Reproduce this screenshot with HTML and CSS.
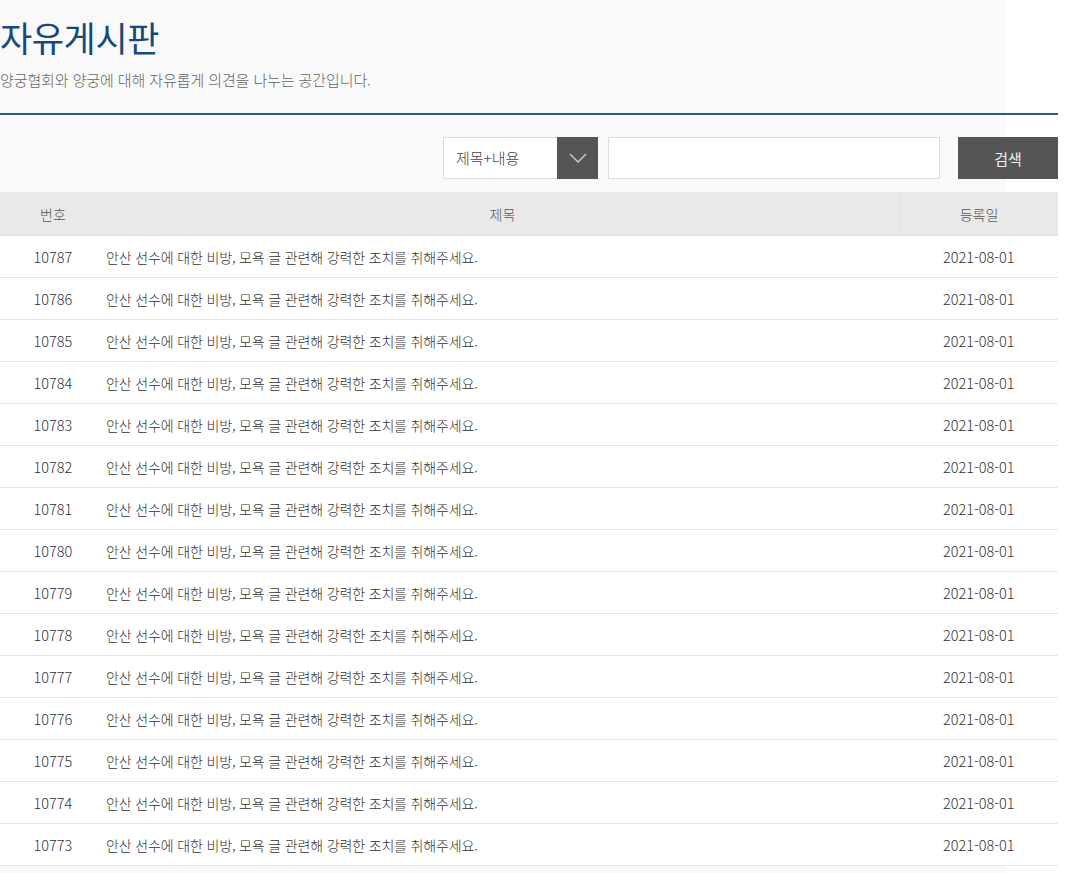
FILE: index.html
```html
<!DOCTYPE html>
<html lang="ko">
<head>
    <meta charset="UTF-8">
    <meta name="viewport" content="width=device-width, initial-scale=1.0">
    <title>자유게시판</title>
    <link rel="stylesheet" href="styles.css">
</head>
<body>
    <div class="page">
        <!-- Title -->
        <div class="board-head">
            <h1>자유게시판</h1>
            <p>양궁협회와 양궁에 대해 자유롭게 의견을 나누는 공간입니다.</p>
        </div>

        <!-- Search -->
        <form class="search">
            <div class="search-select">
                <span class="select-label">제목+내용</span>
                <span class="select-arrow">
                    <svg width="18" height="10" viewBox="0 0 18 10"><polyline points="1,1 9,9 17,1" fill="none" stroke="#d0d0d0" stroke-width="1.3"/></svg>
                </span>
            </div>
            <input type="text" class="search-input">
            <button type="button" class="search-btn">검색</button>
        </form>

        <!-- Board List -->
        <table class="board">
            <thead>
                <tr>
                    <th class="col-num">번호</th>
                    <th class="col-title">제목</th>
                    <th class="col-date">등록일</th>
                </tr>
            </thead>
            <tbody>
                <tr><td class="col-num">10787</td><td class="col-title">안산 선수에 대한 비방, 모욕 글 관련해 강력한 조치를 취해주세요.</td><td class="col-date">2021-08-01</td></tr>
                <tr><td class="col-num">10786</td><td class="col-title">안산 선수에 대한 비방, 모욕 글 관련해 강력한 조치를 취해주세요.</td><td class="col-date">2021-08-01</td></tr>
                <tr><td class="col-num">10785</td><td class="col-title">안산 선수에 대한 비방, 모욕 글 관련해 강력한 조치를 취해주세요.</td><td class="col-date">2021-08-01</td></tr>
                <tr><td class="col-num">10784</td><td class="col-title">안산 선수에 대한 비방, 모욕 글 관련해 강력한 조치를 취해주세요.</td><td class="col-date">2021-08-01</td></tr>
                <tr><td class="col-num">10783</td><td class="col-title">안산 선수에 대한 비방, 모욕 글 관련해 강력한 조치를 취해주세요.</td><td class="col-date">2021-08-01</td></tr>
                <tr><td class="col-num">10782</td><td class="col-title">안산 선수에 대한 비방, 모욕 글 관련해 강력한 조치를 취해주세요.</td><td class="col-date">2021-08-01</td></tr>
                <tr><td class="col-num">10781</td><td class="col-title">안산 선수에 대한 비방, 모욕 글 관련해 강력한 조치를 취해주세요.</td><td class="col-date">2021-08-01</td></tr>
                <tr><td class="col-num">10780</td><td class="col-title">안산 선수에 대한 비방, 모욕 글 관련해 강력한 조치를 취해주세요.</td><td class="col-date">2021-08-01</td></tr>
                <tr><td class="col-num">10779</td><td class="col-title">안산 선수에 대한 비방, 모욕 글 관련해 강력한 조치를 취해주세요.</td><td class="col-date">2021-08-01</td></tr>
                <tr><td class="col-num">10778</td><td class="col-title">안산 선수에 대한 비방, 모욕 글 관련해 강력한 조치를 취해주세요.</td><td class="col-date">2021-08-01</td></tr>
                <tr><td class="col-num">10777</td><td class="col-title">안산 선수에 대한 비방, 모욕 글 관련해 강력한 조치를 취해주세요.</td><td class="col-date">2021-08-01</td></tr>
                <tr><td class="col-num">10776</td><td class="col-title">안산 선수에 대한 비방, 모욕 글 관련해 강력한 조치를 취해주세요.</td><td class="col-date">2021-08-01</td></tr>
                <tr><td class="col-num">10775</td><td class="col-title">안산 선수에 대한 비방, 모욕 글 관련해 강력한 조치를 취해주세요.</td><td class="col-date">2021-08-01</td></tr>
                <tr><td class="col-num">10774</td><td class="col-title">안산 선수에 대한 비방, 모욕 글 관련해 강력한 조치를 취해주세요.</td><td class="col-date">2021-08-01</td></tr>
                <tr><td class="col-num">10773</td><td class="col-title">안산 선수에 대한 비방, 모욕 글 관련해 강력한 조치를 취해주세요.</td><td class="col-date">2021-08-01</td></tr>
            </tbody>
        </table>
    </div>
</body>
</html>
```

FILE: styles.css
```css
/* General Styles */
body {
    margin: 0;
    padding: 0;
    background-color: #fff;
    font-family: "Noto Sans CJK KR", "Noto Sans", sans-serif;
    color: #333;
}

.page {
    width: 1006px;
    min-height: 873px;
    background-color: #f9f9f9;
}

/* Title */
.board-head {
    width: 1058px;
    height: 113px;
    border-bottom: 2px solid #2b5a84;
}

.board-head h1 {
    margin: 0;
    padding-top: 12px;
    font-size: 35px;
    font-weight: 400;
    line-height: 50px;
    letter-spacing: -0.4px;
    color: #174a7a;
}

.board-head p {
    margin: 8px 0 0;
    font-size: 15px;
    font-weight: 300;
    line-height: 20px;
    letter-spacing: -0.1px;
    color: #666;
}

/* Search */
.search {
    width: 1058px;
    display: flex;
    justify-content: flex-end;
    align-items: center;
    padding: 22px 0 13px;
}

.search-select {
    display: flex;
    width: 155px;
    height: 42px;
    box-sizing: border-box;
    border: 1px solid #ddd;
    background-color: #fff;
}

.select-label {
    flex: 1;
    padding-left: 12px;
    font-size: 15px;
    font-weight: 300;
    line-height: 40px;
    color: #444;
}

.select-arrow {
    width: 41px;
    margin: -1px -1px -1px 0;
    background-color: #555;
    display: flex;
    justify-content: center;
    align-items: center;
}

.search-input {
    width: 332px;
    height: 42px;
    box-sizing: border-box;
    margin: 0 18px 0 10px;
    border: 1px solid #ddd;
    background-color: #fff;
    outline: none;
}

.search-btn {
    width: 100px;
    height: 42px;
    border: none;
    background-color: #555;
    color: #eee;
    font-family: inherit;
    font-size: 15px;
    font-weight: 400;
}

/* Board List */
.board {
    width: 1058px;
    border-collapse: collapse;
    font-size: 14px;
    font-weight: 300;
}

.board th {
    height: 43px;
    padding: 0;
    background-color: #e9e9e9;
    font-weight: 300;
    font-size: 14px;
    color: #555;
    border-bottom: 1px solid #e0e0e0;
}

.board th.col-date {
    border-left: 1px solid #e4e4e4;
}

.board td {
    height: 41px;
    padding: 0;
    background-color: #fff;
    border-bottom: 1px solid #e6e6e6;
    color: #333;
}

.board .col-num {
    width: 106px;
    text-align: center;
}

.board td.col-num,
.board td.col-date {
    font-size: 14.5px;
}

.board td.col-title {
    text-align: left;
    letter-spacing: -0.15px;
}

.board .col-date {
    width: 158px;
    text-align: center;
}
```
